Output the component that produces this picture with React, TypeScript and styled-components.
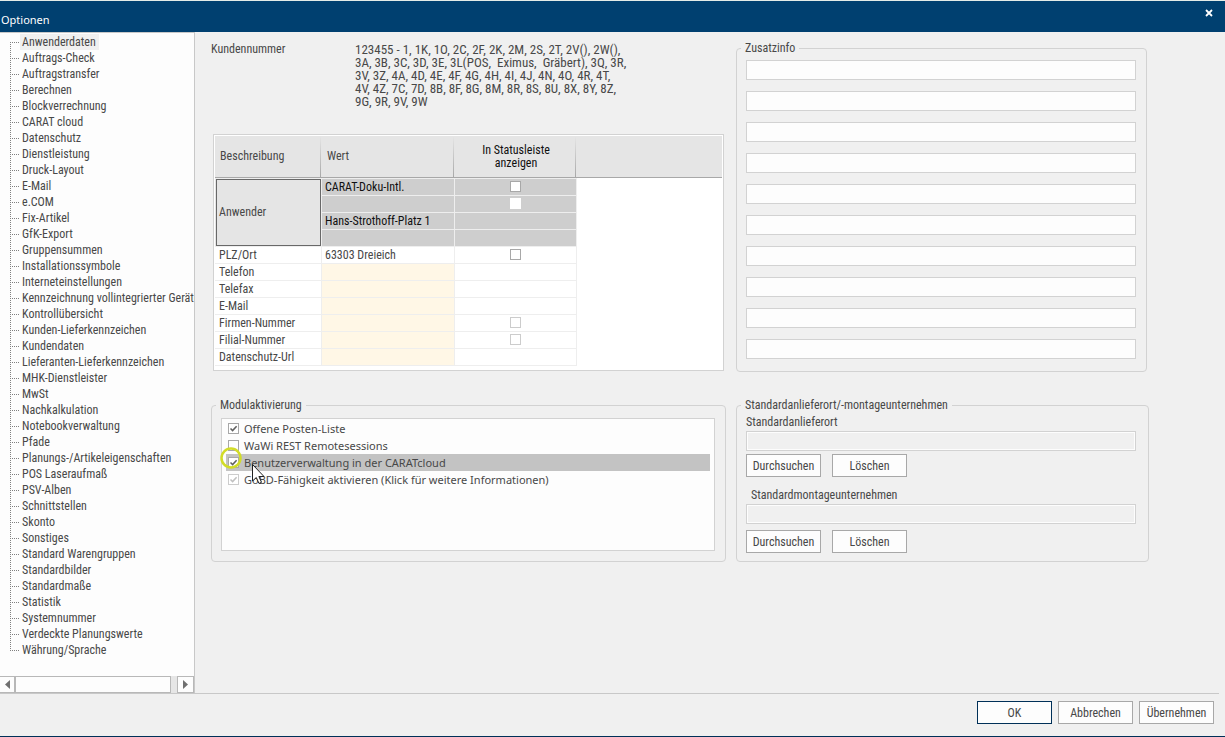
import React from "react";
import styled, { createGlobalStyle, css } from "styled-components";

const uiFont = `"Roboto Condensed", Roboto, "Liberation Sans", Arial, sans-serif`;
const wideFont = `"Noto Sans", "Open Sans", sans-serif`;

const GlobalStyle = createGlobalStyle`
  *, *::before, *::after { box-sizing: border-box; }
  body {
    margin: 0;
    background: #f0f0f0;
    color: #484848;
    font: 12px/16px ${uiFont};
  }
  button, input { font: inherit; color: inherit; }
`;

const Window = styled.div`
  display: flex;
  flex-direction: column;
  min-height: 100vh;
  border-top: 1px solid #e4ece8;
  border-bottom: 1px solid #003058;
`;

const TitleBar = styled.header`
  display: flex;
  justify-content: space-between;
  align-items: flex-start;
  height: 31px;
  flex: none;
  background: #004070;
  color: #fff;
`;

const Title = styled.h1`
  margin: 0;
  padding: 11px 0 0 1px;
  font: 11px/16px ${wideFont};
`;

const CloseButton = styled.button`
  display: flex;
  align-items: center;
  justify-content: center;
  width: 32px;
  height: 24px;
  padding: 0;
  border: 0;
  background: none;
`;

const Main = styled.div`
  display: flex;
  flex: 1;
`;

const Sidebar = styled.nav`
  display: flex;
  flex-direction: column;
  justify-content: space-between;
  flex: none;
  width: 195px;
  overflow: hidden;
  border-top: 1px solid #c8c8c8;
  border-right: 1px solid #c8c8c8;
  background: #fdfdfd;
`;

const Tree = styled.ul`
  margin: 0;
  padding: 1px 0 0 10px;
  list-style: none;
`;

const TreeItem = styled.li`
  display: flex;
  align-items: center;
  height: 16px;

  &::before {
    content: "";
    flex: none;
    align-self: stretch;
    width: 9px;
    background:
      repeating-linear-gradient(to right, #808080 0 1px, transparent 1px 2px) 0 8px / 9px 1px no-repeat,
      repeating-linear-gradient(to bottom, #808080 0 1px, transparent 1px 2px) 0 0 / 1px 16px no-repeat;
  }
  &:first-child::before { background-position: 0 8px, 0 8px; }
  &:last-child::before { background-size: 9px 1px, 1px 8px; }
`;

const TreeLink = styled.a<{ $active?: boolean }>`
  padding: 0 3px 0 2px;
  margin-left: 1px;
  color: inherit;
  text-decoration: none;
  white-space: nowrap;
  background: ${(p) => (p.$active ? "#f0f0f0" : "transparent")};
`;

const ScrollBar = styled.div`
  display: flex;
  height: 17px;
  flex: none;
  background: #e6e6e6;
`;

const ScrollButton = styled.button<{ $start?: boolean }>`
  display: flex;
  align-items: center;
  justify-content: center;
  width: ${(p) => (p.$start ? "15px" : "17px")};
  padding: 0;
  border: 1px solid #b8b8b8;
  border-left-width: ${(p) => (p.$start ? "0" : "1px")};
  background: #fdfdfd;
`;

const ScrollThumb = styled.div`
  flex: 1;
  margin-right: 6px;
  border: 1px solid #b8b8b8;
  background: #fdfdfd;
`;

const Content = styled.main`
  display: grid;
  flex: 1;
  grid-template-columns: minmax(0, 515fr) minmax(0, 413fr);
  grid-template-rows: auto auto;
  align-content: start;
  gap: 26px 10px;
  padding: 9px 76px 24px 16px;
`;

const CustomerPanel = styled.section`
  display: flex;
  flex-direction: column;
  justify-content: space-between;
  padding: 2px 2px 1px 0;
`;

const CustomerInfo = styled.dl`
  display: flex;
  margin: 0;
  line-height: 13px;
`;

const CustomerTerm = styled.dt`
  flex: none;
  width: 144px;
`;

const CustomerValue = styled.dd`
  margin: 0;
  font-size: 13px;
  white-space: pre;
`;

const TableFrame = styled.div`
  height: 237px;
  margin-left: 2px;
  padding: 1px;
  border: 1px solid #d2d2d2;
  background: #fff;
`;

const Table = styled.table`
  width: 100%;
  table-layout: fixed;
  border-collapse: separate;
  border-spacing: 0;
  line-height: 13px;
`;

const HeadCell = styled.th<{ $center?: boolean }>`
  height: 42px;
  padding: 0 5px;
  border-bottom: 1px solid #a8a8a8;
  background: linear-gradient(#e5e5e5, #a8a8a8) right 1px top / 1px 100% no-repeat #e5e5e5;
  font-weight: 400;
  text-align: ${(p) => (p.$center ? "center" : "left")};
  color: ${(p) => (p.$center ? "#101010" : "inherit")};

  &:last-child { background: #e5e5e5; }
`;

const cellTone = {
  plain: css`background: #fff;`,
  selected: css`background: #cecece; color: #101010;`,
  required: css`background: #fff7e6;`,
};

const gridLines = css`
  height: 17px;
  border-right: 1px solid #eeeeee;
  border-bottom: 1px solid #eeeeee;

  tbody tr:first-child > & {
    height: 18px;
    border-top: 1px solid #eeeeee;
  }
`;

const Cell = styled.td<{ $tone?: keyof typeof cellTone }>`
  ${gridLines}
  padding: 0 3px;
  ${(p) => cellTone[p.$tone ?? "plain"]}
`;

const RowHead = styled.th`
  ${gridLines}
  padding: 0 4px;
  font-weight: 400;
  text-align: left;
`;

const FocusedRowHead = styled(RowHead)`
  outline: 1px solid #686868;
  outline-offset: -2px;
  background: #e5e5e5;
`;

const CheckCell = styled(Cell)`
  padding-top: 2px;
  vertical-align: top;
`;

const Check = styled.input.attrs({ type: "checkbox" })<{ $borderless?: boolean }>`
  appearance: none;
  display: block;
  flex: none;
  width: 11px;
  height: 11px;
  margin: 0;
  border: 1px solid ${(p) => (p.$borderless ? "#fff" : "#a8a8a8")};
  background: #fff;

  ${CheckCell} & { margin: 0 auto; }
  &:disabled { border-color: #cccccc; }
  &:checked {
    background: url("data:image/svg+xml,%3Csvg xmlns='http://www.w3.org/2000/svg' viewBox='0 0 9 9'%3E%3Cpath d='M1.5 4.5L3.6 6.6L7.6 2.2' fill='none' stroke='%23606060' stroke-width='1.5'/%3E%3C/svg%3E") center / 9px 9px no-repeat #fff;
  }
  &:checked:disabled {
    background-image: url("data:image/svg+xml,%3Csvg xmlns='http://www.w3.org/2000/svg' viewBox='0 0 9 9'%3E%3Cpath d='M1.5 4.5L3.6 6.6L7.6 2.2' fill='none' stroke='%23c0c0c0' stroke-width='1.5'/%3E%3C/svg%3E");
  }
`;

const Group = styled.fieldset<{ $narrow?: boolean }>`
  min-width: 0;
  margin: 0 ${(p) => (p.$narrow ? "2px" : "0")} 0 0;
  padding: 0 9px 8px;
  border: 1px solid #d2d2d2;
  border-radius: 4px;
`;

const Legend = styled.legend`
  margin-left: -5px;
  padding: 0 4px;
  line-height: 14px;
`;

const FieldStack = styled.div`
  display: flex;
  flex-direction: column;
  gap: 11px;
  padding: 5px 1px 4px 0;
`;

const TextField = styled.input.attrs({ type: "text" })`
  display: block;
  width: 100%;
  height: 20px;
  padding: 0 4px;
  border: 1px solid #d2d2d2;
  background: #fdfdfd;

  &:read-only {
    background: #f0f0f0;
    box-shadow: inset 0 0 0 1px #fdfdfd;
  }
`;

const ModuleList = styled.ul`
  position: relative;
  height: 133px;
  margin: 6px 1px 0 0;
  padding: 1px 4px;
  border: 1px solid #d2d2d2;
  background: #fdfdfd;
  font: 11px/17px ${wideFont};
  list-style: none;
`;

const ModuleRow = styled.li<{ $selected?: boolean }>`
  background: ${(p) => (p.$selected ? "#c3c3c3" : "transparent")};
`;

const ModuleLabel = styled.label`
  display: flex;
  align-items: center;
  gap: 5px;
  height: 17px;
  padding-left: 2px;
`;

const Pointer = styled.svg`
  position: absolute;
  left: -4px;
  top: 26px;
  pointer-events: none;
`;

const Location = styled.div`
  display: flex;
  flex-direction: column;
  padding: 3px 3px 0 0;

  & + & { padding-top: 11px; }
`;

const LocationLabel = styled.label<{ $indent?: boolean }>`
  padding: 0 0 2px ${(p) => (p.$indent ? "5px" : "0")};
  line-height: 14px;
`;

const ButtonRow = styled.div<{ $gap: number }>`
  display: flex;
  gap: 11px;
  padding-top: ${(p) => p.$gap}px;
`;

const Button = styled.button<{ $primary?: boolean }>`
  width: 75px;
  height: 23px;
  padding: 0;
  border: 1px solid ${(p) => (p.$primary ? "#003058" : "#a8a8a8")};
  background: #fdfdfd;
  text-align: center;
`;

const Footer = styled.footer`
  display: flex;
  justify-content: flex-end;
  gap: 6px;
  flex: none;
  height: 43px;
  margin-right: 6px;
  padding: 7px 5px 0 0;
  border-top: 1px solid #c8c8c8;
`;

const pages = [
  "Anwenderdaten", "Auftrags-Check", "Auftragstransfer", "Berechnen", "Blockverrechnung",
  "CARAT cloud", "Datenschutz", "Dienstleistung", "Druck-Layout", "E-Mail", "e.COM",
  "Fix-Artikel", "GfK-Export", "Gruppensummen", "Installationssymbole",
  "Interneteinstellungen", "Kennzeichnung vollintegrierter Geräte", "Kontrollübersicht",
  "Kunden-Lieferkennzeichen", "Kundendaten", "Lieferanten-Lieferkennzeichen",
  "MHK-Dienstleister", "MwSt", "Nachkalkulation", "Notebookverwaltung", "Pfade",
  "Planungs-/Artikeleigenschaften", "POS Laseraufmaß", "PSV-Alben", "Schnittstellen",
  "Skonto", "Sonstiges", "Standard Warengruppen", "Standardbilder", "Standardmaße",
  "Statistik", "Systemnummer", "Verdeckte Planungswerte", "Währung/Sprache",
];

const customerNumbers = [
  "123455 - 1, 1K, 1O, 2C, 2F, 2K, 2M, 2S, 2T, 2V(), 2W(),",
  "3A, 3B, 3C, 3D, 3E, 3L(POS,  Eximus,  Gräbert), 3Q, 3R,",
  "3V, 3Z, 4A, 4D, 4E, 4F, 4G, 4H, 4I, 4J, 4N, 4O, 4R, 4T,",
  "4V, 4Z, 7C, 7D, 8B, 8F, 8G, 8M, 8R, 8S, 8U, 8X, 8Y, 8Z,",
  "9G, 9R, 9V, 9W",
].join("\n");

type CheckState = "on" | "bare" | "disabled";

const userRows: { value: string; check?: CheckState }[] = [
  { value: "CARAT-Doku-Intl.", check: "on" },
  { value: "", check: "bare" },
  { value: "Hans-Strothoff-Platz 1" },
  { value: "" },
];

const detailRows: { label: string; value?: string; check?: CheckState }[] = [
  { label: "PLZ/Ort", value: "63303 Dreieich", check: "on" },
  { label: "Telefon" },
  { label: "Telefax" },
  { label: "E-Mail" },
  { label: "Firmen-Nummer", check: "disabled" },
  { label: "Filial-Nummer", check: "disabled" },
  { label: "Datenschutz-Url" },
];

const modules = [
  { label: "Offene Posten-Liste", checked: true },
  { label: "WaWi REST Remotesessions", checked: false },
  { label: "Benutzerverwaltung in der CARATcloud", checked: true, selected: true },
  { label: "GoBD-Fähigkeit aktivieren (Klick für weitere Informationen)", checked: true, disabled: true },
];

const StatusCheck = ({ state, label }: { state?: CheckState; label: string }) =>
  state ? (
    <Check $borderless={state === "bare"} disabled={state === "disabled"} aria-label={label} />
  ) : null;

const BeschreibungColumn = styled.col`width: 107px;`;
const WertColumn = styled.col`width: 133px;`;
const StatusColumn = styled.col`width: 122px;`;

const DetailsTable = () => (
  <TableFrame>
    <Table>
      <colgroup>
        <BeschreibungColumn />
        <WertColumn />
        <StatusColumn />
        <col />
      </colgroup>
      <thead>
        <tr>
          <HeadCell>Beschreibung</HeadCell>
          <HeadCell>Wert</HeadCell>
          <HeadCell $center>In Statusleiste<br />anzeigen</HeadCell>
          <HeadCell aria-hidden="true" />
        </tr>
      </thead>
      <tbody>
        {userRows.map((row, i) => (
          <tr key={i}>
            {i === 0 && <FocusedRowHead rowSpan={userRows.length} scope="rowgroup">Anwender</FocusedRowHead>}
            <Cell $tone="selected">{row.value}</Cell>
            <CheckCell $tone="selected"><StatusCheck state={row.check} label={`Anwender ${i + 1}`} /></CheckCell>
          </tr>
        ))}
        {detailRows.map((row) => (
          <tr key={row.label}>
            <RowHead scope="row">{row.label}</RowHead>
            <Cell $tone={row.value ? "plain" : "required"}>{row.value}</Cell>
            <CheckCell><StatusCheck state={row.check} label={row.label} /></CheckCell>
          </tr>
        ))}
      </tbody>
    </Table>
  </TableFrame>
);

const LocationField = ({ id, label, indent, gap }: { id: string; label: string; indent?: boolean; gap: number }) => (
  <Location>
    <LocationLabel htmlFor={id} $indent={indent}>{label}</LocationLabel>
    <TextField id={id} readOnly />
    <ButtonRow $gap={gap}>
      <Button type="button">Durchsuchen</Button>
      <Button type="button">Löschen</Button>
    </ButtonRow>
  </Location>
);

export default function App() {
  return (
    <>
      <GlobalStyle />
      <Window>
        <TitleBar>
          <Title>Optionen</Title>
          <CloseButton type="button" aria-label="Schließen">
            <svg width="8" height="8" viewBox="0 0 8 8">
              <path d="M1 1L7 7M7 1L1 7" stroke="#fff" strokeWidth="1.8" />
            </svg>
          </CloseButton>
        </TitleBar>
        <Main>
          <Sidebar>
            <Tree>
              {pages.map((page, i) => (
                <TreeItem key={page}>
                  <TreeLink href="#" $active={i === 0}>{page}</TreeLink>
                </TreeItem>
              ))}
            </Tree>
            <ScrollBar>
              <ScrollButton type="button" $start aria-label="Nach links">
                <svg width="5" height="9" viewBox="0 0 5 9"><path d="M5 0V9L0 4.500Z" fill="#707070" /></svg>
              </ScrollButton>
              <ScrollThumb />
              <ScrollButton type="button" aria-label="Nach rechts">
                <svg width="5" height="9" viewBox="0 0 5 9"><path d="M0 0V9L5 4.500Z" fill="#707070" /></svg>
              </ScrollButton>
            </ScrollBar>
          </Sidebar>
          <Content>
            <CustomerPanel>
              <CustomerInfo>
                <CustomerTerm>Kundennummer</CustomerTerm>
                <CustomerValue>{customerNumbers}</CustomerValue>
              </CustomerInfo>
              <DetailsTable />
            </CustomerPanel>
            <Group $narrow>
              <Legend>Zusatzinfo</Legend>
              <FieldStack>
                {Array.from({ length: 10 }, (_, i) => (
                  <TextField key={i} aria-label={`Zusatzinfo ${i + 1}`} />
                ))}
              </FieldStack>
            </Group>
            <Group>
              <Legend>Modulaktivierung</Legend>
              <ModuleList>
                {modules.map((m) => (
                  <ModuleRow key={m.label} $selected={m.selected}>
                    <ModuleLabel>
                      <Check defaultChecked={m.checked} disabled={m.disabled} />
                      {m.label}
                    </ModuleLabel>
                  </ModuleRow>
                ))}
                <Pointer width="50" height="42" viewBox="0 0 50 42" aria-hidden="true">
                  <circle cx="13" cy="13" r="9.500" fill="none" stroke="#d2dc28" strokeWidth="2.500" />
                  <path d="M34.500 19.500V36L38.300 32.500L41 38.500L43.500 37.300L40.900 31.500H46Z" fill="#fff" stroke="#202020" />
                </Pointer>
              </ModuleList>
            </Group>
            <Group>
              <Legend>Standardanlieferort/-montageunternehmen</Legend>
              <LocationField id="delivery" label="Standardanlieferort" gap={3} />
              <LocationField id="assembly" label="Standardmontageunternehmen" indent gap={6} />
            </Group>
          </Content>
        </Main>
        <Footer>
          <Button type="button" $primary>OK</Button>
          <Button type="button">Abbrechen</Button>
          <Button type="button">Übernehmen</Button>
        </Footer>
      </Window>
    </>
  );
}
